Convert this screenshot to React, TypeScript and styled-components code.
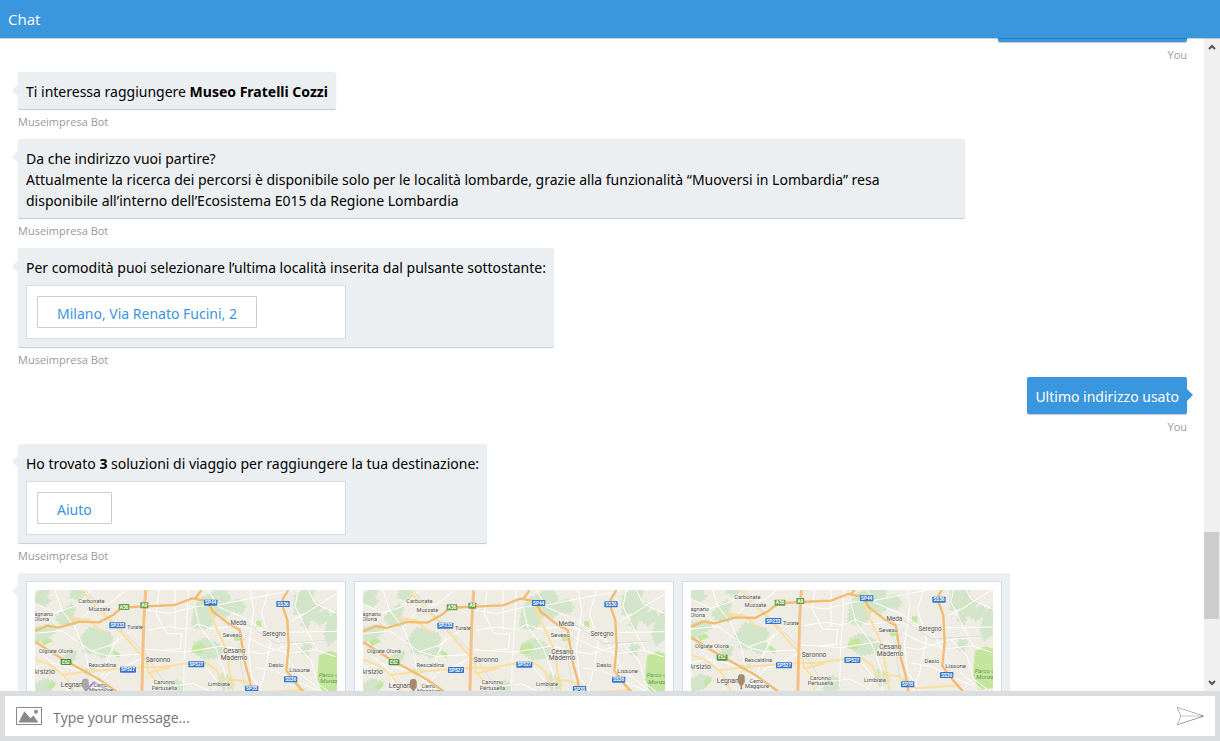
import React, { useLayoutEffect, useRef } from "react";
import styled, { createGlobalStyle } from "styled-components";

const blue = "#3a96dd";
const messageFont = `"Noto Sans", "Segoe UI", sans-serif`;

const GlobalStyle = createGlobalStyle`
  *, *::before, *::after { box-sizing: border-box; }
  body {
    margin: 0;
    font-family: "Open Sans", "Segoe UI", sans-serif;
    font-size: 14px;
    line-height: 21px;
    color: #000;
    background: #fff;
  }
`;

const Page = styled.div`
  display: flex;
  flex-direction: column;
  height: 100vh;
  overflow: hidden;
`;

const Header = styled.header`
  position: relative;
  z-index: 1;
  flex: none;
  height: 38px;
  padding: 0 8px;
  background: ${blue};
  color: #fff;
  box-shadow: 0 1px rgba(0, 0, 0, 0.2);
`;

const Title = styled.h1`
  margin: 0;
  font-size: 15px;
  font-weight: 400;
  line-height: 38px;
`;

const Conversation = styled.main`
  display: flex;
  flex: 1;
  min-height: 0;
`;

const MessageList = styled.div`
  flex: 1;
  min-width: 0;
  padding: 16px 10px 0;
  overflow: hidden;
  font-family: ${messageFont};
`;

const MessageRow = styled.div<{ $mine?: boolean }>`
  display: flex;
  flex-direction: column;
  align-items: ${(p) => (p.$mine ? "flex-end" : "flex-start")};
  margin: 0 7px 0 8px;
  padding-bottom: 11px;
`;

const Bubble = styled.div<{ $mine?: boolean; $wide?: boolean }>`
  position: relative;
  flex: none;
  max-width: ${(p) => (p.$wide ? "none" : "81%")};
  padding: 8px;
  border-radius: 2px;
  background: ${(p) => (p.$mine ? blue : "#eceff1")};
  color: ${(p) => (p.$mine ? "#fff" : "#000")};
  box-shadow: 0 1px 1px rgba(0, 0, 0, 0.22);

  &::before {
    content: "";
    position: absolute;
    top: 12px;
    ${(p) => (p.$mine ? "left: 100%" : "right: 100%")};
    border: 6px solid transparent;
    border-width: 6px ${(p) => (p.$mine ? "0 6px 6px" : "6px 6px 0")};
    ${(p) => (p.$mine ? `border-left-color: ${blue}` : "border-right-color: #eceff1")};
  }
`;

const Text = styled.p`
  margin: 1px 0 -1px;
`;

const Sender = styled.div`
  padding-top: 6px;
  font-family: "Open Sans", sans-serif;
  font-size: 11px;
  line-height: 13px;
  color: #999;
`;

const ActionCard = styled.div`
  width: 320px;
  margin-top: 8px;
  padding: 10px;
  border: 1px solid #d2dde5;
  background: #fff;
`;

const ActionButton = styled.button`
  display: block;
  height: 32px;
  padding: 2px 19px 0;
  border: 1px solid #ccc;
  border-radius: 1px;
  background: #fff;
  color: ${blue};
  font: inherit;
`;

const Carousel = styled.div`
  display: flex;
  gap: 8px;
`;

const MapCard = styled.div`
  width: 320px;
  padding: 8px;
  border: 1px solid #d2dde5;
  background: #fff;

  svg { display: block; width: 100%; }
`;

const Scrollbar = styled.div`
  display: flex;
  flex: none;
  flex-direction: column;
  width: 16px;
  background: #f0f0f0;
`;

const ScrollArrow = styled.span`
  display: flex;
  align-items: center;
  justify-content: center;
  height: 17px;
`;

const ScrollGap = styled.span<{ $share: number }>`
  flex: ${(p) => p.$share};
`;

const ScrollThumb = styled.span`
  flex: 87;
  margin-right: 1px;
  background: #cdcdcd;
`;

const Composer = styled.form`
  display: flex;
  flex: none;
  align-items: center;
  height: 50px;
  padding: 0 11px;
  border: 5px solid #dbdee1;
  background: #fff;
`;

const IconButton = styled.button`
  display: flex;
  flex: none;
  padding: 0;
  border: 0;
  background: none;
  fill: #8a8a8a;
`;

const MessageInput = styled.input`
  flex: 1;
  min-width: 0;
  height: 40px;
  padding: 2px 11px 0;
  border: 0;
  outline: 0;
  background: none;
  font: inherit;

  &::placeholder { color: #757575; opacity: 1; }
`;

type Place = [string, number, number, number?];

const places: Place[] = [
  ["Carbonate", 169, 33],
  ["Mozzate", 193, 58],
  ["agnano", 26, 71],
  ["Olona", 20, 87],
  ["Turate", 300, 112],
  ["Meda", 610, 100, 19],
  ["Seveso", 592, 134, 18],
  ["Seregno", 717, 131, 19],
  ["Olgiate Olona", 63, 182],
  ["Saronno", 369, 209, 20],
  ["Cesano", 598, 184, 20],
  ["Maderno", 597, 204, 20],
  ["Rescaldina", 202, 224],
  ["Arsizio", 26, 245, 22],
  ["Desio", 723, 225, 18],
  ["Lissone", 794, 241, 18],
  ["Legnano", 116, 286, 20],
  ["Cerro", 196, 286],
  ["Maggiore", 198, 301],
  ["Caronno", 388, 276],
  ["Pertusella", 388, 293],
  ["Limbiate", 552, 282],
];

const shields: [string, number, number, string?][] = [
  ["A36", 267, 51, "#6b9f45"],
  ["A9", 328, 46, "#6b9f45"],
  ["E62", 93, 216, "#4d9133"],
  ["SP44", 527, 38],
  ["SS36", 744, 42],
  ["SP233", 247, 106],
  ["SP527", 279, 239],
  ["SP527", 484, 223],
  ["SS36", 767, 268],
  ["SP35", 650, 296],
];

const forest =
  "M15 0h30l-10 22 12 10-20 18-27-12V18z M108 0h32l14 18-18 14-30-10z M84 60l24-18 14 10-10 28 24 14-20 14-40-6-14-16z M0 112l52-8 10 22-30 20-32 14z M160 112l30 6 34 10 10 18-12 22 10 22-30 14-18-14-40-2 2-20-16-10 14-22z M478 54l22-30 46-22 24-2 16 22-6 18 32-14 20 24-12 20-24-6-28 18-24-12-14 34-22 14-38-8z M478 160l30-16 36 14 22 20-14 24-44 6-26-18z M778 20l26-20h36l-10 32 30 16-14 24 30-14 10 22-30 26-28-22-10 34-20-16 12-36-32 8z M880 84l26-22v80l-26 24-12-30z M106 178l20 8-8 24-22 12-8-24z M398 280l26-10 26 14-14 40-36-8z M560 252l30 10 6 28-28 12-18-24z M0 282l28-16 32 10-16 30-44 12z M150 240l24-6 4 12-20 12z M806 160l24 6-10 28-22-4z";
const park =
  "M474 166l28-8 10 14-14 20-30-4z M852 196l32-14 22 8v118l-42 4-18-42z M663 92h16v20l-16-2z M234 178l22 14-6 12-14-8z M18 152l26-8 10 10-28 12z M36 288l20-14 6 12-16 14z M594 138l20-6 2 18-16 4z";
const minor =
  "M0 40l60 28 60-20 50-48 M60 0l20 60 40 52 30 70 10 50 50 70 M0 130l80-8 90 62 50 14 110-6 M120 110l44-50 60-20 50-40 M170 184l60-20 100-70 M340 120l60-10 60 8 30-16 40 14 80-8 90 20 206-4 M372 0l-8 70 30 60 46 2-4 44-50 4 M420 0v120 M460 0l-6 120-6 84-2 100 M332 60l70 10 80-20 70-6 120-24 100-18 M480 50l14 60 46 60 30 80 6 70 M332 178l120 8 110-18 120 24 90-30 100-10 M520 0l30 50 90 40 90 60 50 90 90 70 M646 0l10 60-16 120 10 80 40 60 M700 0l-20 70 26 90-20 100-20 60 M632 140l60 30 70 20 80-10 60 20 M772 90l40-20 94-60 M778 160l50 50 20 70 40 30 M790 0l-10 50 30 60 36 70 M180 300l40-50 50-20 60-30 M30 200l50 40 20 70 M0 232l60-12 90 26 80 60 M336 250l60 40 80-10 60 30 M510 228l40 50-20 30 M660 232l60 10 60 30 70 30 M820 0l20 40 66 30 M250 140l-30 60-20 60";
const rail = "M150 0l60 70 120 120 80 120 M632 100l90 60 184-10 M640 130l-30 40 20 130";
const local =
  "M140 0l44 52 62 60 60 70 30 30 2 34 28 28 6 60 M0 208l44 16 40 30 60-8 92-8 98-6 44 0 80-12 56-2 32 24 8 24 70 6 54 36 132-10 M100 82l60 8 40 36 M84 254l22 30 20 50 M516 40l28 74 32 70 6 50 14 80 M336 250l70-18";
const highway =
  "M0 123l38-16 32 6 64-18 58 2 42-22 26-22 70-4 90-4 52-20 44 8 18 32 52 40 28 14 16 100 14 50 12 70 M480 26l20-26 M760 0l-17 28 0 22 14 40 4 80-7 70 22 32 44 50 M0 155l76 48 118 66 70 50";
const vertical = "M332 0l-6 100-6 230";

type RouteMapProps = { shift: number; label: string; pin: string; route?: boolean };

const RouteMap = ({ shift, label, pin, route }: RouteMapProps) => (
  <svg viewBox="0 0 906 480" role="img" aria-label={label} fontFamily="Roboto, sans-serif">
    <rect width="906" height="480" fill="#efece4" />
    <g transform={`translate(0 ${shift})`} fill="none" strokeLinejoin="round">
      <path d={forest} fill="#d3e5c9" stroke="#d3e5c9" strokeWidth="7" strokeDasharray="7 6" />
      <path d={park} fill="#c3e59e" />
      <path d={minor} stroke="#fff" strokeWidth="3" />
      <path d={rail} stroke="#dcdcdc" strokeWidth="3" />
      <path d={local} stroke="#fbdf9f" strokeWidth="6" />
      <path d={highway} stroke="#f3bb70" strokeWidth="7" />
      <path d={vertical} stroke="#f5c083" strokeWidth="9" />
      {route && <path d="M151 303l26-26 16 10 40 20" stroke="#9583ea" strokeWidth="6" />}
      {shields.map(([name, x, y, color = "#3676cb"], i) => {
        const width = name.length * 8 + 8;
        return (
          <g key={i}>
            <rect x={x - width / 2} y={y - 9} width={width} height="18" rx="2" fill={color} />
            <text x={x} y={y + 5} fill="#fff" fontSize="14" fontWeight="700" textAnchor="middle">
              {name}
            </text>
          </g>
        );
      })}
      {places.map(([name, x, y, size = 17]) => (
        <text
          key={name}
          x={x}
          y={y + 6}
          fontSize={size}
          textAnchor="middle"
          fill="#4f4f4f"
          stroke="#f7f5f0"
          strokeWidth="3"
          paintOrder="stroke"
        >
          {name}
        </text>
      ))}
      <g fill="#5f9a4f" fontSize="18" fontStyle="italic">
        <text x="851" y="261">Parco di</text>
        <text x="856" y="280">Monza</text>
      </g>
      <path
        d="M141 276a10 10 0 0 1 20 0v14l-8 11v10h-4v-10l-8-11z"
        fill={pin}
        stroke="#8d7a66"
        strokeOpacity="0.5"
      />
    </g>
  </svg>
);

type MessageProps = { mine?: boolean; wide?: boolean; children: React.ReactNode };

const Message = ({ mine, wide, children }: MessageProps) => (
  <MessageRow $mine={mine}>
    <Bubble $mine={mine} $wide={wide}>{children}</Bubble>
    <Sender>{mine ? "You" : "Museimpresa Bot"}</Sender>
  </MessageRow>
);

const INITIAL_SCROLL = 49;

export default function App() {
  const list = useRef<HTMLDivElement>(null);

  useLayoutEffect(() => {
    if (list.current) list.current.scrollTop = INITIAL_SCROLL;
  }, []);

  return (
    <Page>
      <GlobalStyle />
      <Header>
        <Title>Chat</Title>
      </Header>
      <Conversation>
        <MessageList ref={list}>
          <Message mine>
            <Text>Vedi il Museo Fratelli Cozzi</Text>
          </Message>
          <Message>
            <Text>Ti interessa raggiungere <b>Museo Fratelli Cozzi</b></Text>
          </Message>
          <Message>
            <Text>
              Da che indirizzo vuoi partire?
              <br />
              Attualmente la ricerca dei percorsi è disponibile solo per le località lombarde, grazie alla
              funzionalità “Muoversi in Lombardia” resa disponibile&nbsp;all’interno dell’Ecosistema E015 da
              Regione Lombardia
            </Text>
          </Message>
          <Message>
            <Text>Per comodità puoi selezionare l’ultima località inserita dal pulsante sottostante:</Text>
            <ActionCard>
              <ActionButton type="button">Milano, Via Renato Fucini, 2</ActionButton>
            </ActionCard>
          </Message>
          <Message mine>
            <Text>Ultimo indirizzo usato</Text>
          </Message>
          <Message>
            <Text>Ho trovato <b>3</b> soluzioni di viaggio per raggiungere la tua destinazione:</Text>
            <ActionCard>
              <ActionButton type="button">Aiuto</ActionButton>
            </ActionCard>
          </Message>
          <Message wide>
            <Carousel>
              <MapCard><RouteMap shift={0} label="Soluzione 1" pin="#aaa6a6" route /></MapCard>
              <MapCard><RouteMap shift={1} label="Soluzione 2" pin="#a58a6c" /></MapCard>
              <MapCard><RouteMap shift={-13} label="Soluzione 3" pin="#a58a6c" /></MapCard>
            </Carousel>
          </Message>
        </MessageList>
        <Scrollbar aria-hidden="true">
          <ScrollArrow>
            <svg width="8" height="6" viewBox="0 0 8 6">
              <path d="M1 5l3-3 3 3" fill="none" stroke="#555" strokeWidth="2" />
            </svg>
          </ScrollArrow>
          <ScrollGap $share={477} />
          <ScrollThumb />
          <ScrollGap $share={55} />
          <ScrollArrow>
            <svg width="8" height="6" viewBox="0 0 8 6">
              <path d="M1 1l3 3 3-3" fill="none" stroke="#555" strokeWidth="2" />
            </svg>
          </ScrollArrow>
        </Scrollbar>
      </Conversation>
      <Composer onSubmit={(e) => e.preventDefault()}>
        <IconButton type="button" aria-label="Upload file">
          <svg width="26" height="18" viewBox="0 0 26 18">
            <path d="M19.96 4.79m-2 0a2 2 0 0 1 4 0 2 2 0 0 1-4 0zM8.32 4.19L2.5 15.53 22.45 15.53 17.46 8.56 14.42 11.18 8.32 4.19ZM1.04 1L1.04 17 24.96 17 24.96 1 1.04 1ZM1.03 0L24.96 0C25.54 0 26 0.45 26 0.99L26 17.01C26 17.55 25.54 18 24.96 18L1.03 18C0.46 18 0 17.55 0 17.01L0 0.99C0 0.45 0.46 0 1.03 0Z" />
          </svg>
        </IconButton>
        <MessageInput type="text" aria-label="Message" placeholder="Type your message..." />
        <IconButton type="submit" aria-label="Send">
          <svg width="27" height="18" viewBox="0 0 27 18">
            <path d="M26.79 9.38A0.31 0.31 0 0 0 26.79 8.79L0.41 0.02C0.36 0 0.34 0 0.32 0 0.14 0 0 0.13 0 0.29 0 0.33 0.01 0.37 0.03 0.41L3.44 9.08 0.03 17.76A0.29 0.29 0 0 0 0.01 17.8 0.28 0.28 0 0 0 0.01 17.86C0.01 18.02 0.14 18.16 0.3 18.16A0.3 0.3 0 0 0 0.41 18.14L26.79 9.38ZM0.81 0.79L24.84 8.79 3.98 8.79 0.81 0.79ZM3.98 9.37L24.84 9.37 0.81 17.37 3.98 9.37Z" />
          </svg>
        </IconButton>
      </Composer>
    </Page>
  );
}
